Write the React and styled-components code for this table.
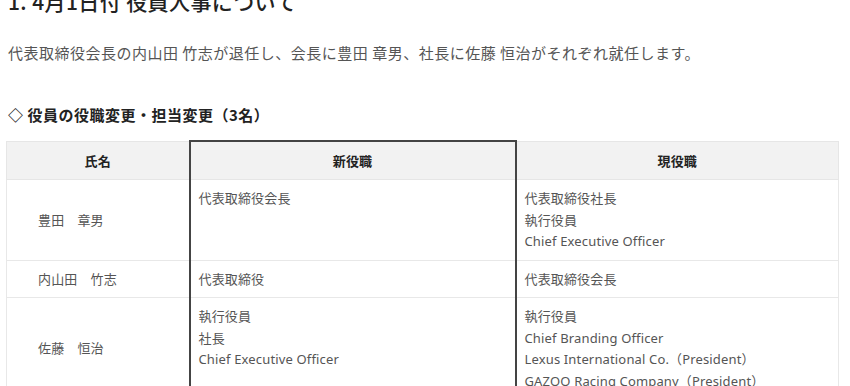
import React from "react";
import styled, { createGlobalStyle } from "styled-components";

const Global = createGlobalStyle`
  html, body { margin: 0; padding: 0; background: #fff; }
  body {
    font-family: "Noto Sans", "Noto Sans CJK JP", sans-serif;
    color: #333;
    overflow: hidden;
  }
`;

const Page = styled.div`
  width: 850px;
  height: 386px;
  overflow: hidden;
  padding: 0 12px 0 6px;
  box-sizing: border-box;
`;

const Title = styled.h2`
  margin: -14px 0 0 2px;
  font-family: "Noto Sans CJK JP", sans-serif;
  font-size: 21px;
  line-height: 30px;
  font-weight: 500;
  letter-spacing: 0.4px;
  color: #222;
`;

const Lead = styled.p`
  margin: 25px 0 0 2px;
  font-family: "Noto Sans CJK JP", sans-serif;
  font-size: 15px;
  line-height: 24px;
  color: #555;
  letter-spacing: 0.5px;
`;

const Heading = styled.h3`
  margin: 38px 0 0 2px;
  font-family: "Noto Sans CJK JP", sans-serif;
  font-size: 15px;
  line-height: 24px;
  font-weight: 700;
  letter-spacing: 0.5px;
  color: #222;
`;

const Table = styled.table`
  margin-top: 13px;
  width: 832px;
  border-collapse: collapse;
  table-layout: fixed;
  font-size: 13px;
  letter-spacing: 0.15px;
  color: #555;
`;

const Th = styled.th`
  background: #f2f2f2;
  height: 37px;
  padding: 0;
  font-family: "Noto Sans CJK JP", sans-serif;
  font-weight: 700;
  color: #222;
  text-align: center;
  border: 1px solid #e6e6e6;
  ${(p) => p.$focus && `border-left: 2px solid #444; border-right: 2px solid #444; border-top: 2px solid #444;`}
`;

const Td = styled.td`
  padding: 8px 8px 7px ${(p) => (p.$name ? "31px" : "8px")};
  line-height: 21.5px;
  vertical-align: ${(p) => (p.$name ? "middle" : "top")};
  border: 1px solid #e8e8e8;
  ${(p) => p.$focus && `border-left: 2px solid #444; border-right: 2px solid #444;`}
`;

const Line = styled.div`
  white-space: nowrap;
`;

const rows = [
  {
    name: "豊田　章男",
    next: ["代表取締役会長"],
    now: ["代表取締役社長", "執行役員", "Chief Executive Officer"],
  },
  {
    name: "内山田　竹志",
    next: ["代表取締役"],
    now: ["代表取締役会長"],
  },
  {
    name: "佐藤　恒治",
    next: ["執行役員", "社長", "Chief Executive Officer"],
    now: [
      "執行役員",
      "Chief Branding Officer",
      "Lexus International Co.（President）",
      "GAZOO Racing Company（President）",
    ],
  },
];

export default function App() {
  return (
    <>
      <Global />
      <Page>
        <Title>1. 4月1日付 役員人事について</Title>
        <Lead>
          代表取締役会長の内山田 竹志が退任し、会長に豊田 章男、社長に佐藤 恒治がそれぞれ就任します。
        </Lead>
        <Heading>◇ 役員の役職変更・担当変更（3名）</Heading>
        <Table>
          <colgroup>
            <col style={{ width: 183 }} />
            <col style={{ width: 326 }} />
            <col style={{ width: 323 }} />
          </colgroup>
          <thead>
            <tr>
              <Th>氏名</Th>
              <Th $focus>新役職</Th>
              <Th>現役職</Th>
            </tr>
          </thead>
          <tbody>
            {rows.map((r) => (
              <tr key={r.name}>
                <Td $name>{r.name}</Td>
                <Td $focus>
                  {r.next.map((l) => (
                    <Line key={l}>{l}</Line>
                  ))}
                </Td>
                <Td>
                  {r.now.map((l) => (
                    <Line key={l}>{l}</Line>
                  ))}
                </Td>
              </tr>
            ))}
          </tbody>
        </Table>
      </Page>
    </>
  );
}
